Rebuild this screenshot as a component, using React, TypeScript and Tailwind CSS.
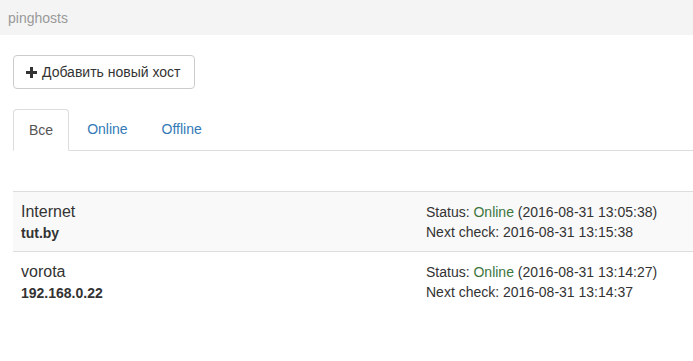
import React from "react";

const hosts = [
  {
    name: "Internet",
    address: "tut.by",
    checked: "2016-08-31 13:05:38",
    next: "2016-08-31 13:15:38",
  },
  {
    name: "vorota",
    address: "192.168.0.22",
    checked: "2016-08-31 13:14:27",
    next: "2016-08-31 13:14:37",
  },
];

const PlusIcon = () => (
  <svg width="11" height="11" viewBox="0 0 11 11" className="shrink-0">
    <rect x="4" y="0" width="3" height="11" fill="#333" />
    <rect x="0" y="4" width="11" height="3" fill="#333" />
  </svg>
);

const App = () => {
  return (
    <div className="min-h-[361px] bg-white text-[14px] leading-5 text-[#333] font-['Liberation_Sans',Arial,sans-serif]">
      <div className="h-[35px] bg-[#f4f4f4] pl-2 flex items-center text-[#999]">pinghosts</div>

      <div className="pl-[13px]">
        <button className="mt-5 h-[34px] w-[182px] flex items-center gap-[5px] pl-3 border border-[#ccc] rounded bg-white text-[#333]">
          <PlusIcon />
          <span>Добавить новый хост</span>
        </button>

        <div className="mt-5 flex border-b border-[#ddd]">
          <div className="-mb-px mr-[2px] px-[15px] py-[10px] border border-[#ddd] border-b-white rounded-t bg-white text-[#555]">
            Все
          </div>
          <div className="mr-[2px] px-[16px] py-[10px] text-[#337ab7]">Online</div>
          <div className="px-[16px] py-[10px] text-[#337ab7]">Offline</div>
        </div>

        <div className="mt-10">
          {hosts.map((h, i) => (
            <div
              key={h.name}
              className={`grid grid-cols-[405px_1fr] h-[60px] border-t border-[#ddd] ${
                i % 2 === 0 ? "bg-[#f9f9f9]" : "bg-white"
              }`}
            >
              <div className="pl-2 pt-[9px]">
                <div className="text-[16px] leading-[22px]">{h.name}</div>
                <div className="font-bold">{h.address}</div>
              </div>
              <div className="pl-2 pt-[10px]">
                <div>
                  Status: <span className="text-[#3c763d]">Online</span> ({h.checked})
                </div>
                <div>Next check: {h.next}</div>
              </div>
            </div>
          ))}
        </div>
      </div>
    </div>
  );
};

export default App;
